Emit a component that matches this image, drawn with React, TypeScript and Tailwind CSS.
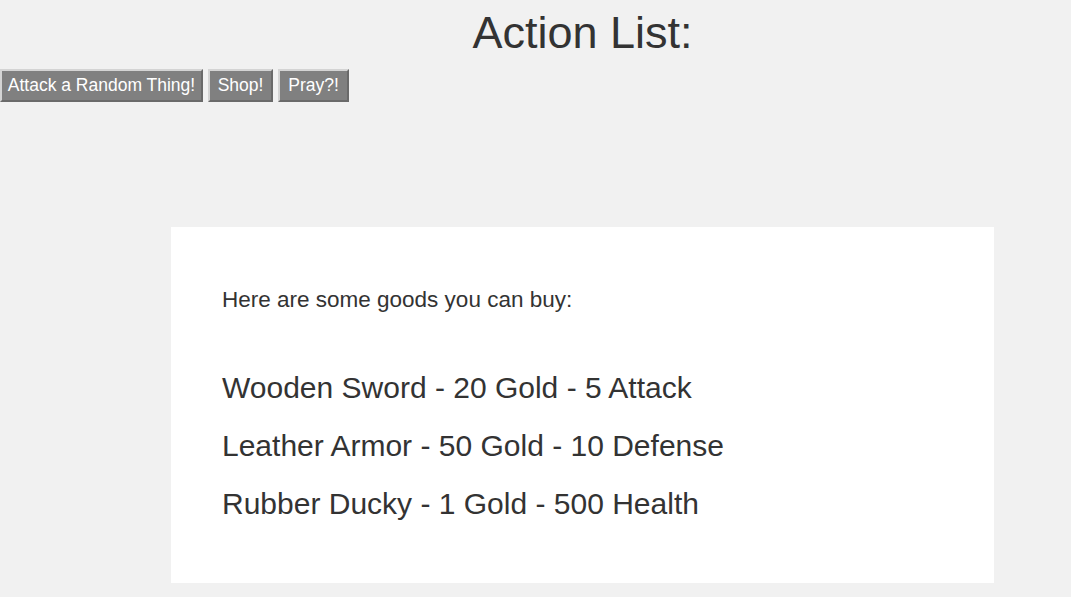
export default function App() {
  const actions = [
    { label: "Attack a Random Thing!", w: "w-[203px]" },
    { label: "Shop!", w: "w-[65px]" },
    { label: "Pray?!", w: "w-[71px]" },
  ];
  const goods = [
    "Wooden Sword - 20 Gold - 5 Attack",
    "Leather Armor - 50 Gold - 10 Defense",
    "Rubber Ducky - 1 Gold - 500 Health",
  ];

  return (
    <div className="min-h-[597px] bg-[#f1f1f1] text-[#333] font-['Liberation_Sans',Arial,sans-serif]">
      {/* Header */}
      <div className="ml-[171px] w-[823px] pt-[7px] text-center">
        <h1 className="text-[45px] leading-[52px]">Action List:</h1>
      </div>

      {/* Action buttons */}
      <div className="flex gap-[5px] mt-[10px]">
        {actions.map((a) => (
          <button
            key={a.label}
            className={`${a.w} h-[33px] text-center text-[17.5px] text-white bg-[#808080] border-2 border-t-[#d4d4d4] border-l-[#d4d4d4] border-b-[#6a6a6a] border-r-[#6a6a6a]`}
          >
            {a.label}
          </button>
        ))}
      </div>

      {/* Shop panel */}
      <div className="ml-[171px] mt-[125px] w-[823px] bg-white pl-[51px] pt-[60px] pb-[50px]">
        <p className="text-[22.5px] leading-[25px]">Here are some goods you can buy:</p>
        <ul className="mt-[47px]">
          {goods.map((g) => (
            <li key={g} className="text-[30px] leading-[58px]">
              {g}
            </li>
          ))}
        </ul>
      </div>
    </div>
  );
}
